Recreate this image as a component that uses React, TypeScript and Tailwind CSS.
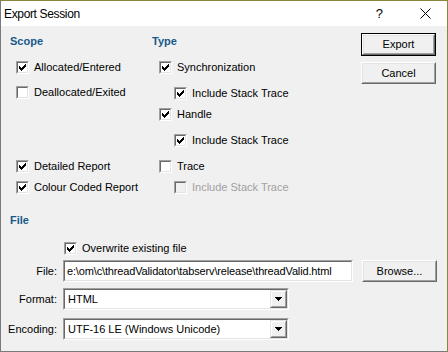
import type { ReactNode } from "react"

const font = { fontFamily: '"Liberation Sans", Arial, sans-serif' }

function Check() {
  return (
    <svg width="9" height="9" viewBox="0 0 9 9" shapeRendering="crispEdges">
      <path d="M1 3h1v1h1v1h1V4h1V3h1V2h1V1h1v3h-1v1h-1v1h-1v1h-1v1H3V7H2V6H1z" fill="#000" />
    </svg>
  )
}

function Box({ checked, disabled }: { checked?: boolean; disabled?: boolean }) {
  return (
    <span className="inline-flex w-[13px] h-[13px] shrink-0 border border-t-[#a0a0a0] border-l-[#a0a0a0] border-b-white border-r-white">
      <span
        className={`flex w-[11px] h-[11px] items-center justify-center border border-t-[#696969] border-l-[#696969] border-b-[#e3e3e3] border-r-[#e3e3e3] ${
          disabled ? "bg-[#f0f0f0]" : "bg-white"
        }`}
      >
        {checked && <Check />}
      </span>
    </span>
  )
}

function CheckRow({
  label,
  checked,
  disabled,
  className = "",
}: {
  label: string
  checked?: boolean
  disabled?: boolean
  className?: string
}) {
  return (
    <div className={`flex h-[20px] items-center gap-[5px] ${className}`}>
      <Box checked={checked} disabled={disabled} />
      <span className={disabled ? "text-[#a0a0a0]" : "text-black"}>{label}</span>
    </div>
  )
}

function Button({ children, isDefault, className = "" }: { children: ReactNode; isDefault?: boolean; className?: string }) {
  const inner = (
    <div className="flex flex-1 border border-t-white border-l-white border-b-[#696969] border-r-[#696969]">
      <div className="flex flex-1 items-center justify-center border border-t-[#e3e3e3] border-l-[#e3e3e3] border-b-[#a0a0a0] border-r-[#a0a0a0] bg-[#f0f0f0] text-black">
        {children}
      </div>
    </div>
  )
  if (isDefault) {
    return <div className={`flex w-[75px] border border-black ${className}`}>{inner}</div>
  }
  return <div className={`flex w-[75px] ${className}`}>{inner}</div>
}

function Sunken({ children, className = "" }: { children: ReactNode; className?: string }) {
  return (
    <div className={`flex border border-t-[#a0a0a0] border-l-[#a0a0a0] border-b-white border-r-white ${className}`}>
      <div className="flex flex-1 items-center border border-t-[#696969] border-l-[#696969] border-b-[#e3e3e3] border-r-[#e3e3e3] bg-white overflow-hidden">
        {children}
      </div>
    </div>
  )
}

function Combo({ value }: { value: string }) {
  return (
    <Sunken className="w-[226px] h-[22px]">
      <span className="flex-1 pl-[3px] whitespace-nowrap">{value}</span>
      <div className="flex w-[17px] h-full border border-t-[#e3e3e3] border-l-[#e3e3e3] border-b-[#696969] border-r-[#696969]">
        <div className="flex flex-1 items-center justify-center bg-[#f0f0f0] border border-t-white border-l-white border-b-[#a0a0a0] border-r-[#a0a0a0]">
          <svg width="7" height="4" viewBox="0 0 7 4" shapeRendering="crispEdges">
            <path d="M0 0h7v1h-1v1h-1v1h-1v1h-1V3H2V2H1V1H0z" fill="#000" />
          </svg>
        </div>
      </div>
    </Sunken>
  )
}

export default function App() {
  return (
    <div
      className="w-[448px] h-[352px] flex flex-col bg-[#f0f0f0] border border-t-[#8a8640] border-r-[#8a8640] border-l-[#7a7a7a] border-b-[#7a7a7a] text-[11px] text-black overflow-hidden"
      style={font}
    >
      <div className="flex h-[25px] shrink-0 items-center bg-white text-[12px]">
        <span className="pl-[3px] tracking-[-0.35px]">Export Session</span>
        <span className="ml-auto mr-[37px] text-[13px]">?</span>
        <svg className="mr-[16px]" width="11" height="11" viewBox="0 0 11 11">
          <path d="M0.5 0.5L10.5 10.5M10.5 0.5L0.5 10.5" stroke="#000" strokeWidth="1" />
        </svg>
      </div>

      <div className="flex">
        <div className="flex pl-[9px] pt-[5px]">
          <div className="flex w-[142px] flex-col">
            <div className="flex h-[20px] items-center font-bold text-[#17598a]">Scope</div>
            <CheckRow className="mt-[6px] pl-[6px]" label="Allocated/Entered" checked />
            <CheckRow className="mt-[5px] pl-[6px]" label="Deallocated/Exited" />
            <CheckRow className="mt-[54px] pl-[6px]" label="Detailed Report" checked />
            <CheckRow className="mt-[1px] pl-[6px]" label="Colour Coded Report" checked />
          </div>
          <div className="flex flex-col">
            <div className="flex h-[20px] items-center font-bold text-[#17598a]">Type</div>
            <CheckRow className="mt-[6px] pl-[7px]" label="Synchronization" checked />
            <CheckRow className="mt-[6px] pl-[22px]" label="Include Stack Trace" checked />
            <CheckRow className="mt-[1px] pl-[7px]" label="Handle" checked />
            <CheckRow className="mt-[6px] pl-[22px]" label="Include Stack Trace" checked />
            <CheckRow className="mt-[6px] pl-[7px]" label="Trace" />
            <CheckRow className="mt-[1px] pl-[22px]" label="Include Stack Trace" disabled />
          </div>
        </div>
        <div className="ml-auto mr-[11px] mt-[7px] flex flex-col">
          <Button isDefault className="h-[23px]">Export</Button>
          <Button className="mt-[6px] h-[22px]">Cancel</Button>
        </div>
      </div>

      <div className="mt-[13px] flex h-[20px] items-center pl-[9px] font-bold text-[#17598a]">File</div>

      <div className="grid grid-cols-[56px_auto] gap-x-[6px]">
        <div />
        <CheckRow className="mt-[8px] pl-[1px]" label="Overwrite existing file" checked />

        <div className="mt-[2px] flex h-[22px] items-center justify-end">File:</div>
        <div className="mt-[2px] flex h-[22px] items-center gap-[9px]">
          <Sunken className="w-[290px] h-[22px]">
            <span className="pl-[2px] whitespace-nowrap tracking-[-0.15px]">{"e:\\om\\c\\threadValidator\\tabserv\\release\\threadValid.html"}</span>
          </Sunken>
          <Button className="h-[22px]">Browse...</Button>
        </div>

        <div className="mt-[6px] flex h-[22px] items-center justify-end">Format:</div>
        <div className="mt-[6px] flex h-[22px]">
          <Combo value="HTML" />
        </div>

        <div className="mt-[8px] flex h-[22px] items-center justify-end">Encoding:</div>
        <div className="mt-[8px] flex h-[22px]">
          <Combo value="UTF-16 LE (Windows Unicode)" />
        </div>
      </div>
    </div>
  )
}
